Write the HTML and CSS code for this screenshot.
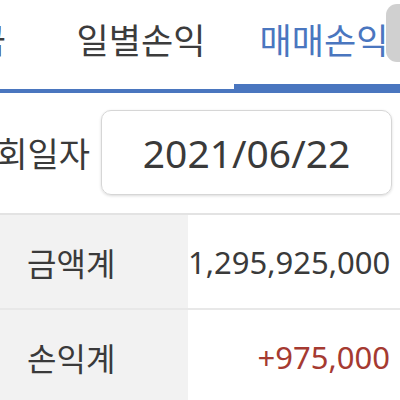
FILE: index.html
```html
<!DOCTYPE html>
<html lang="ko">
<head>
<meta charset="utf-8">
<link rel="stylesheet" href="styles.css">
</head>
<body>
<div class="screen">
  <nav class="tabs">
    <div class="tab first">예수금</div>
    <div class="tab">일별손익</div>
    <div class="tab active">매매손익</div>
  </nav>
  <div class="scroll-handle"></div>
  <div class="query">
    <span class="query-label">조회일자</span>
    <div class="date-box">2021/06/22</div>
  </div>
  <div class="summary">
    <div class="row">
      <div class="label">금액계</div>
      <div class="value">1,295,925,000</div>
    </div>
    <div class="row">
      <div class="label">손익계</div>
      <div class="value profit">+975,000</div>
    </div>
  </div>
</div>
</body>
</html>
```
FILE: styles.css
```css
html, body {
  margin: 0;
  padding: 0;
  background: #ffffff;
}
body {
  width: 400px;
  height: 400px;
  overflow: hidden;
  font-family: "Noto Sans", "Noto Sans CJK KR", sans-serif;
  color: #3a3a3a;
}
.screen {
  position: relative;
  width: 400px;
  height: 400px;
  overflow: hidden;
}
.tabs {
  display: flex;
  height: 93px;
  box-sizing: border-box;
  border-bottom: 4px solid #4a76bf;
  overflow: hidden;
}
.tab {
  flex: 0 0 186px;
  display: flex;
  align-items: center;
  justify-content: center;
  box-sizing: border-box;
  padding-bottom: 13px;
  font-size: 35px;
  white-space: nowrap;
  color: #3c3c3c;
}
.tab.first {
  margin-left: -138px;
  justify-content: flex-end;
  padding-right: 42px;
}
.tab.active {
  color: #4a76bf;
  border-bottom: 5px solid #4a76bf;
  padding-bottom: 8px;
  padding-right: 6px;
}
.scroll-handle {
  position: absolute;
  left: 386px;
  top: 4px;
  width: 22px;
  height: 58px;
  border-radius: 11px 0 0 11px;
  background: rgba(150, 150, 150, 0.45);
}
.query {
  display: flex;
  align-items: center;
  height: 122px;
  box-sizing: border-box;
  padding: 17px 8px 18px 0;
  border-bottom: 2px solid #e3e3e3;
}
.query-label {
  font-size: 34px;
  margin-left: -35px;
  margin-right: 11px;
  white-space: nowrap;
}
.date-box {
  flex: 1;
  height: 85px;
  box-sizing: border-box;
  display: flex;
  align-items: center;
  justify-content: center;
  border: 1.5px solid #d6d6d6;
  border-radius: 10px;
  box-shadow: 0 1px 3px rgba(0, 0, 0, 0.15);
  font-size: 39px;
  color: #3a3a3a;
}
.summary {
  display: flex;
  flex-direction: column;
}
.row {
  display: grid;
  grid-template-columns: 188px 1fr;
  height: 93px;
  border-bottom: 2px solid #e8e8e8;
}
.label {
  display: flex;
  align-items: center;
  padding-left: 27px;
  background: #f2f2f2;
  font-size: 32px;
}
.value {
  display: flex;
  align-items: center;
  justify-content: flex-end;
  padding-right: 10px;
  font-size: 31px;
  color: #3a3a3a;
}
.value.profit {
  color: #a53a31;
}
```
